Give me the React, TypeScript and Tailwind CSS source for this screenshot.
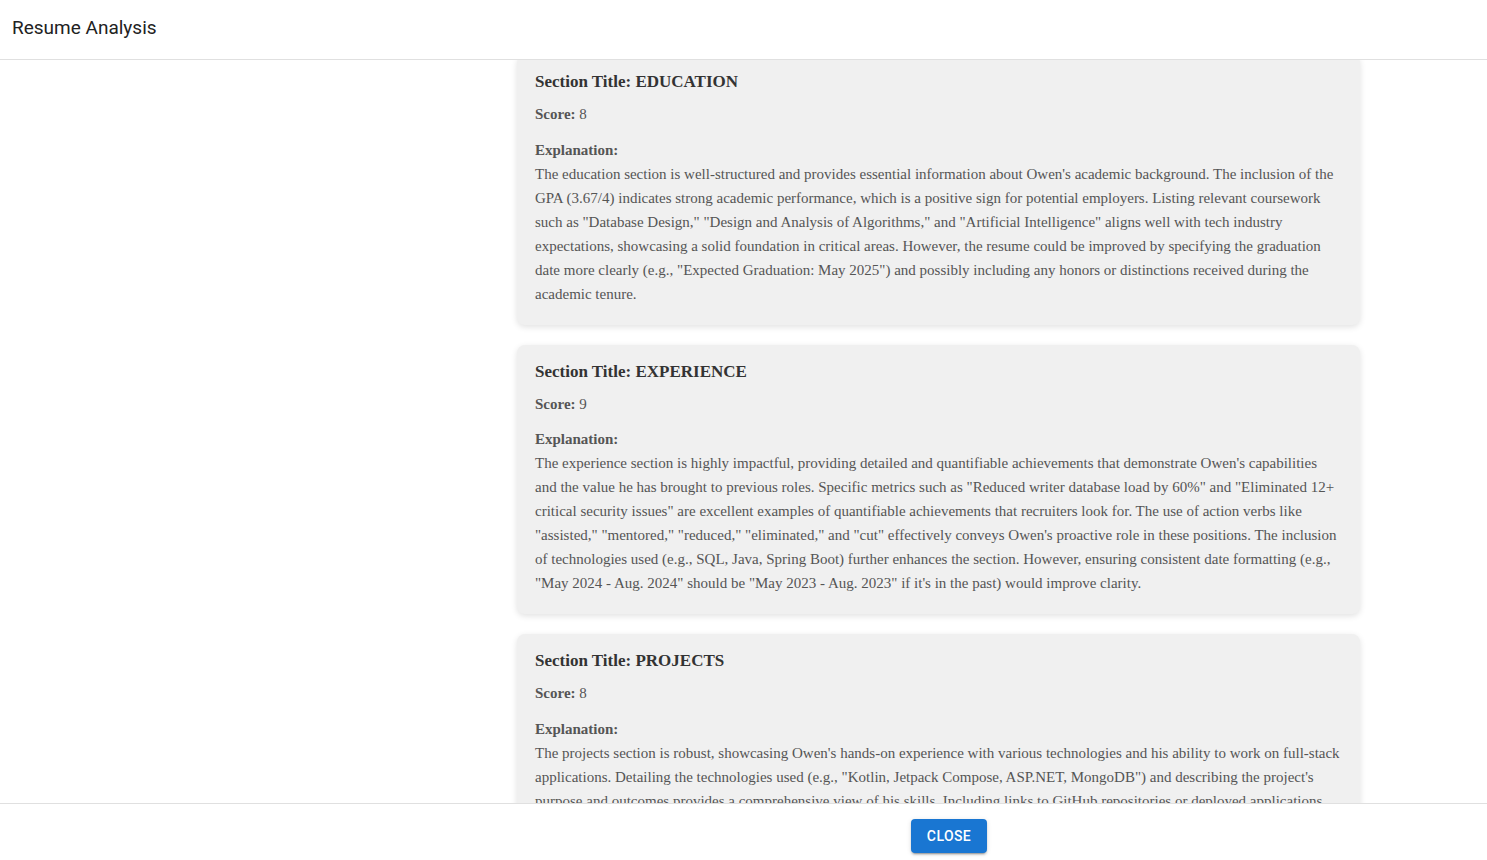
import React from 'react';

type Section = {
  title: string;
  score: number;
  explanation: string;
};

const sections: Section[] = [
  {
    title: 'EDUCATION',
    score: 8,
    explanation:
      'The education section is well-structured and provides essential information about Owen\'s academic background. The inclusion of the GPA (3.67/4) indicates strong academic performance, which is a positive sign for potential employers. Listing relevant coursework such as "Database Design," "Design and Analysis of Algorithms," and "Artificial Intelligence" aligns well with tech industry expectations, showcasing a solid foundation in critical areas. However, the resume could be improved by specifying the graduation date more clearly (e.g., "Expected Graduation: May 2025") and possibly including any honors or distinctions received during the academic tenure.',
  },
  {
    title: 'EXPERIENCE',
    score: 9,
    explanation:
      'The experience section is highly impactful, providing detailed and quantifiable achievements that demonstrate Owen\'s capabilities and the value he has brought to previous roles. Specific metrics such as "Reduced writer database load by 60%" and "Eliminated 12+ critical security issues" are excellent examples of quantifiable achievements that recruiters look for. The use of action verbs like "assisted," "mentored," "reduced," "eliminated," and "cut" effectively conveys Owen\'s proactive role in these positions. The inclusion of technologies used (e.g., SQL, Java, Spring Boot) further enhances the section. However, ensuring consistent date formatting (e.g., "May 2024 - Aug. 2024" should be "May 2023 - Aug. 2023" if it\'s in the past) would improve clarity.',
  },
  {
    title: 'PROJECTS',
    score: 8,
    explanation:
      'The projects section is robust, showcasing Owen\'s hands-on experience with various technologies and his ability to work on full-stack applications. Detailing the technologies used (e.g., "Kotlin, Jetpack Compose, ASP.NET, MongoDB") and describing the project\'s purpose and outcomes provides a comprehensive view of his skills. Including links to GitHub repositories or deployed applications would further strengthen this section by allowing recruiters to verify his work directly.',
  },
];

function SectionCard({ section }: { section: Section }) {
  return (
    <div className="w-[843px] rounded-lg bg-[#f0f0f0] px-[18px] pt-[16px] pb-[19px] shadow-[0_2px_6px_rgba(0,0,0,0.12)]">
      <h3 className="mb-[9px] text-[17px] leading-[22px] font-bold text-[#333]">
        Section Title: {section.title}
      </h3>
      <p className="mb-[11.5px] leading-6 text-[#555]">
        <strong>Score:</strong> {section.score}
      </p>
      <p className="leading-6 font-bold text-[#555]">Explanation:</p>
      <p className="leading-6 text-[#555]">{section.explanation}</p>
    </div>
  );
}

export default function App() {
  return (
    <div className="flex h-screen flex-col bg-white font-['Liberation_Serif',serif] text-[15px]">
      {/* Header */}
      <header className="flex h-[60px] shrink-0 items-center border-b border-[#e0e0e0] pb-[3px] pl-3">
        <h2 className="font-['Roboto',sans-serif] text-[19px] font-normal text-[#222]">Resume Analysis</h2>
      </header>

      {/* Content */}
      <main className="min-h-0 flex-1 overflow-hidden">
        <div className="-mt-[5px] flex flex-col gap-5 pl-[517px]">
          {sections.map((s) => (
            <SectionCard key={s.title} section={s} />
          ))}
        </div>
      </main>

      {/* Footer */}
      <footer className="flex shrink-0 justify-center border-t border-[#e0e0e0] pt-[15px] pb-[7px] pl-[411px]">
        <button className="h-[34px] rounded-[4px] bg-[#1976d2] px-4 font-['Roboto',sans-serif] text-[14px] font-medium tracking-[0.4px] text-white uppercase shadow-[0_3px_1px_-2px_rgba(0,0,0,0.2),0_2px_2px_0_rgba(0,0,0,0.14),0_1px_5px_0_rgba(0,0,0,0.12)]">
          Close
        </button>
      </footer>
    </div>
  );
}
